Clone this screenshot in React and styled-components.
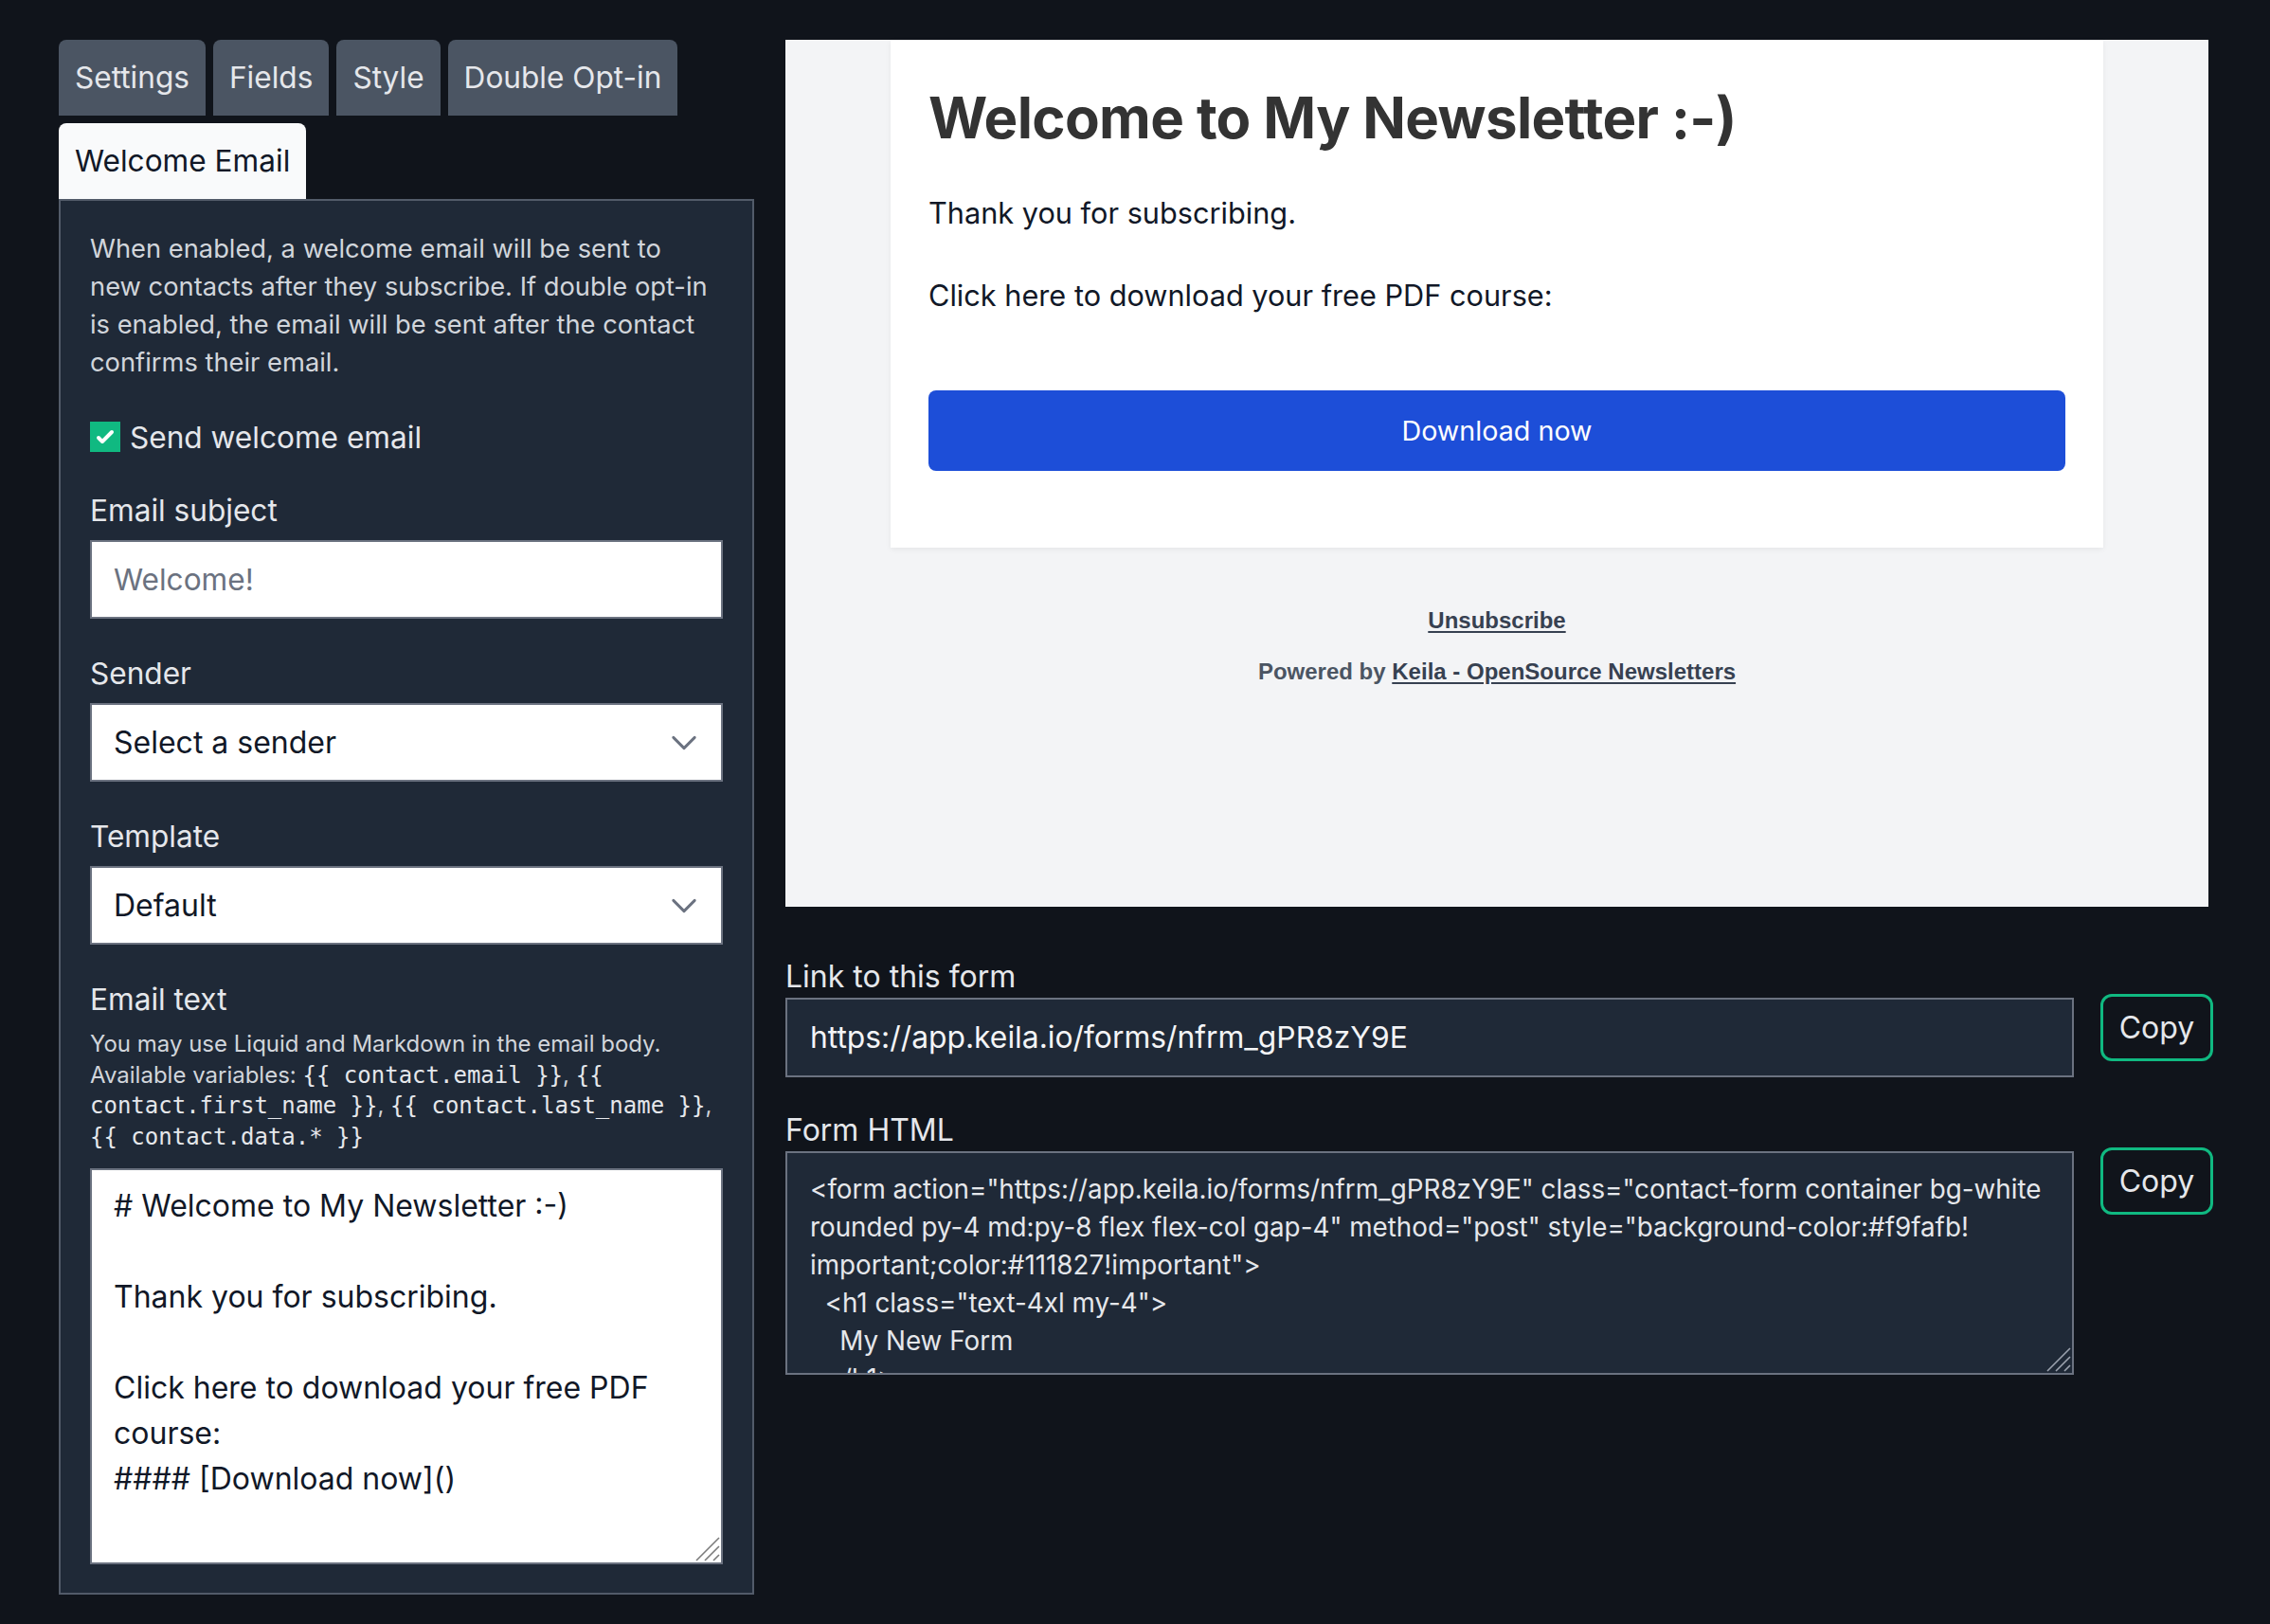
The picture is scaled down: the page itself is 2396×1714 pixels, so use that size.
import React from "react";
import styled, { createGlobalStyle } from "styled-components";

const GlobalStyle = createGlobalStyle`
  html, body { margin: 0; padding: 0; background: #10141b; }
  body { font-family: Inter, "Noto Sans", sans-serif; -webkit-font-smoothing: antialiased; }
  * { box-sizing: border-box; }
`;

const Page = styled.div`
  display: grid;
  grid-template-columns: 734px 1fr;
  column-gap: 33px;
  align-items: start;
  padding: 42px 60px 30px 62px;
  min-height: 100vh;
`;

const LeftCol = styled.div`
  display: flex;
  flex-direction: column;
`;

const TabBar = styled.div`
  display: flex;
  flex-wrap: wrap;
  gap: 8px;
`;

const Tab = styled.button`
  height: 80px;
  padding: 0 17px;
  border: 0;
  border-radius: 8px 8px 0 0;
  font-family: inherit;
  font-size: 31.6px;
  line-height: 80px;
  background: ${(p) => (p.$active ? "#f9fafb" : "#4b5563")};
  color: ${(p) => (p.$active ? "#111827" : "#e5e7eb")};
  cursor: pointer;
`;

const Panel = styled.div`
  display: flex;
  flex-direction: column;
  background: #1f2937;
  border: 2px solid #525b69;
  padding: 31px 31px 30px;
`;

const Description = styled.p`
  margin: 0 -6px 0 0;
  font-size: 27.3px;
  line-height: 40px;
  color: #d1d5db;
`;

const CheckRow = styled.label`
  display: flex;
  align-items: center;
  gap: 10px;
  height: 40px;
  margin-top: 38px;
  font-size: 31.6px;
  color: #e5e7eb;
`;

const CheckBox = styled.span`
  width: 32px;
  height: 32px;
  background: #10b981;
  display: flex;
  align-items: center;
  justify-content: center;
  flex-shrink: 0;
`;

const FieldGroup = styled.div`
  display: flex;
  flex-direction: column;
  margin-top: 37.5px;
`;

const Label = styled.div`
  font-size: 31.6px;
  line-height: 40px;
  color: #e5e7eb;
  margin-bottom: 11.5px;
`;

const TextInput = styled.input`
  height: 83px;
  width: 100%;
  border: 2px solid #6b7280;
  background: #ffffff;
  padding: 0 23px;
  font-family: inherit;
  font-size: 31.6px;
  color: #111827;
  outline: none;
  &::placeholder { color: #6b7280; }
`;

const SelectBox = styled.div`
  height: 83px;
  border: 2px solid #6b7280;
  background: #ffffff;
  padding: 0 11px 0 23px;
  display: flex;
  align-items: center;
  justify-content: space-between;
  font-size: 32px;
  color: #111827;
`;

const HelpText = styled.div`
  font-size: 24px;
  line-height: 32.5px;
  color: #d1d5db;
`;

const Code = styled.code`
  font-family: "DejaVu Sans Mono", "Liberation Mono", monospace;
  font-size: 24px;
  color: #e5e7eb;
`;

const AreaWrap = styled.div`
  position: relative;
  display: flex;
  flex: 1;
  min-width: 0;
  margin-top: ${(p) => p.$gap}px;
`;

const Grip = styled.svg`
  position: absolute;
  right: ${(p) => p.$inset}px;
  bottom: ${(p) => p.$inset}px;
  width: 26px;
  height: 26px;
  pointer-events: none;
`;

const BodyTextarea = styled.textarea`
  height: 418px;
  width: 100%;
  border: 2px solid #6b7280;
  background: #ffffff;
  padding: 14px 20px 14px 23px;
  font-family: inherit;
  font-size: 32px;
  line-height: 48px;
  color: #111827;
  resize: none;
  overflow: hidden;
  outline: none;
`;

const RightCol = styled.div`
  display: flex;
  flex-direction: column;
`;

const Preview = styled.div`
  height: 915px;
  margin-right: 5px;
  background: #f3f4f6;
  display: flex;
  flex-direction: column;
  align-items: center;
`;

const EmailCard = styled.div`
  width: 1280px;
  background: #ffffff;
  padding: 46px 40px 81px;
  box-shadow: 0 2px 6px rgba(0, 0, 0, 0.06);
  display: flex;
  flex-direction: column;
`;

const EmailHeading = styled.h1`
  margin: 0;
  font-size: 60px;
  line-height: 72px;
  font-weight: 700;
  color: #333333;
  letter-spacing: -0.65px;
`;

const EmailParagraph = styled.p`
  margin: ${(p) => p.$gap}px 0 0;
  font-size: 30.7px;
  line-height: 46px;
  color: #111827;
`;

const EmailButton = styled.a`
  margin-top: 77px;
  height: 85px;
  background: #1d4ed8;
  border-radius: 8px;
  color: #ffffff;
  font-size: 28.7px;
  display: flex;
  align-items: center;
  justify-content: center;
  text-decoration: none;
`;

const Footer = styled.div`
  margin-top: 61px;
  display: flex;
  flex-direction: column;
  align-items: center;
  gap: 22px;
  font-family: "Liberation Sans", Arial, sans-serif;
  font-weight: 700;
  font-size: 24px;
  line-height: 32px;
  color: #4b5563;
`;

const FooterLink = styled.a`
  color: #374151;
  text-decoration: underline;
  text-decoration-thickness: 2px;
  text-underline-offset: 3px;
`;

const FieldLabel = styled.div`
  margin-top: ${(p) => p.$gap}px;
  font-size: 32px;
  line-height: 36px;
  color: #e5e7eb;
`;

const FieldRow = styled.div`
  display: flex;
  align-items: flex-start;
  gap: 28px;
`;

const DarkInput = styled.input`
  flex: 1;
  min-width: 0;
  margin-top: 4px;
  height: 84px;
  background: #1f2937;
  border: 2px solid #6b7280;
  padding: 0 24px;
  font-family: inherit;
  font-size: 31.8px;
  color: #f3f4f6;
  outline: none;
`;

const DarkTextarea = styled.textarea`
  width: 100%;
  height: 236px;
  background: #1f2937;
  border: 2px solid #6b7280;
  padding: 18px 22px 18px 24px;
  font-family: inherit;
  font-size: 27.8px;
  line-height: 40px;
  color: #e5e7eb;
  resize: none;
  overflow: hidden;
  outline: none;
`;

const CopyButton = styled.button`
  width: 119px;
  height: 71px;
  flex-shrink: 0;
  border: 3px solid #10b981;
  border-radius: 12px;
  background: transparent;
  color: #e5e7eb;
  font-family: inherit;
  font-size: 32px;
  cursor: pointer;
`;

const Chevron = () => (
  <svg width="56" height="56" viewBox="0 0 20 20" fill="none">
    <path d="M6 8l4 4 4-4" stroke="#6b7280" strokeWidth="1.05" strokeLinecap="round" strokeLinejoin="round" />
  </svg>
);

const Check = () => (
  <svg width="32" height="32" viewBox="0 0 16 16" fill="#ffffff">
    <path d="M12.207 4.793a1 1 0 010 1.414l-5 5a1 1 0 01-1.414 0l-2-2a1 1 0 011.414-1.414L6.5 9.086l4.293-4.293a1 1 0 011.414 0z" />
  </svg>
);

const ResizeGrip = ({ color, inset }) => (
  <Grip $inset={inset} viewBox="0 0 26 26" fill="none">
    <path d="M1 25L25 1M10 25L25 10M19 25L25 19" stroke={color} strokeWidth="1.6" />
  </Grip>
);

const bodyText = `# Welcome to My Newsletter :-)

Thank you for subscribing.

Click here to download your free PDF course:
#### [Download now]()`;

const formHtml = `<form action="https://app.keila.io/forms/nfrm_gPR8zY9E" class="contact-form container bg-white rounded py-4 md:py-8 flex flex-col gap-4" method="post" style="background-color:#f9fafb!\u200Bimportant;color:#111827!important">
  <h1 class="text-4xl my-4">
    My New Form
  </h1>
  <div class="flex flex-col">
    <label for="contact_email">Email</label>
  </div>
</form>`;

const tabs = ["Settings", "Fields", "Style", "Double Opt-in", "Welcome Email"];

export default function App() {
  return (
    <>
      <GlobalStyle />
      <Page>
        <LeftCol>
          <TabBar>
            {tabs.map((t) => (
              <Tab key={t} $active={t === "Welcome Email"}>
                {t}
              </Tab>
            ))}
          </TabBar>
          <Panel>
            <Description>
              When enabled, a welcome email will be sent to
              <br />
              new contacts after they subscribe. If double opt-in
              <br />
              is enabled, the email will be sent after the contact
              <br />
              confirms their email.
            </Description>
            <CheckRow>
              <CheckBox>
                <Check />
              </CheckBox>
              Send welcome email
            </CheckRow>
            <FieldGroup>
              <Label>Email subject</Label>
              <TextInput placeholder="Welcome!" readOnly />
            </FieldGroup>
            <FieldGroup>
              <Label>Sender</Label>
              <SelectBox>
                <span>Select a sender</span>
                <Chevron />
              </SelectBox>
            </FieldGroup>
            <FieldGroup>
              <Label>Template</Label>
              <SelectBox>
                <span>Default</span>
                <Chevron />
              </SelectBox>
            </FieldGroup>
            <FieldGroup>
              <Label>Email text</Label>
              <HelpText>
                <span>You may use Liquid and Markdown in the email body.</span>{" "}
                <span>Available variables:</span> <Code>{"{{ contact.email }}"}</Code>,{" "}
                <Code>{"{{"}</Code> <Code>{"contact.first_name }}"}</Code>,{" "}
                <Code>{"{{ contact.last_name }}"}</Code>, <Code>{"{{ contact.data.* }}"}</Code>
              </HelpText>
              <AreaWrap $gap={17}>
                <BodyTextarea defaultValue={bodyText} />
                <ResizeGrip color="#7b7b7b" inset={3} />
              </AreaWrap>
            </FieldGroup>
          </Panel>
        </LeftCol>

        <RightCol>
          <Preview>
            <EmailCard>
              <EmailHeading>Welcome to My Newsletter :-)</EmailHeading>
              <EmailParagraph $gap={42}>Thank you for subscribing.</EmailParagraph>
              <EmailParagraph $gap={41}>Click here to download your free PDF course:</EmailParagraph>
              <EmailButton href="#">Download now</EmailButton>
            </EmailCard>
            <Footer>
              <FooterLink href="#">Unsubscribe</FooterLink>
              <div>
                Powered by <FooterLink href="#">Keila - OpenSource Newsletters</FooterLink>
              </div>
            </Footer>
          </Preview>

          <FieldLabel $gap={55.5}>Link to this form</FieldLabel>
          <FieldRow>
            <DarkInput readOnly value="https://app.keila.io/forms/nfrm_gPR8zY9E" />
            <CopyButton>Copy</CopyButton>
          </FieldRow>

          <FieldLabel $gap={38.5}>Form HTML</FieldLabel>
          <FieldRow>
            <AreaWrap $gap={4}>
              <DarkTextarea readOnly defaultValue={formHtml} />
              <ResizeGrip color="#9ca3af" inset={3} />
            </AreaWrap>
            <CopyButton>Copy</CopyButton>
          </FieldRow>
        </RightCol>
      </Page>
    </>
  );
}
